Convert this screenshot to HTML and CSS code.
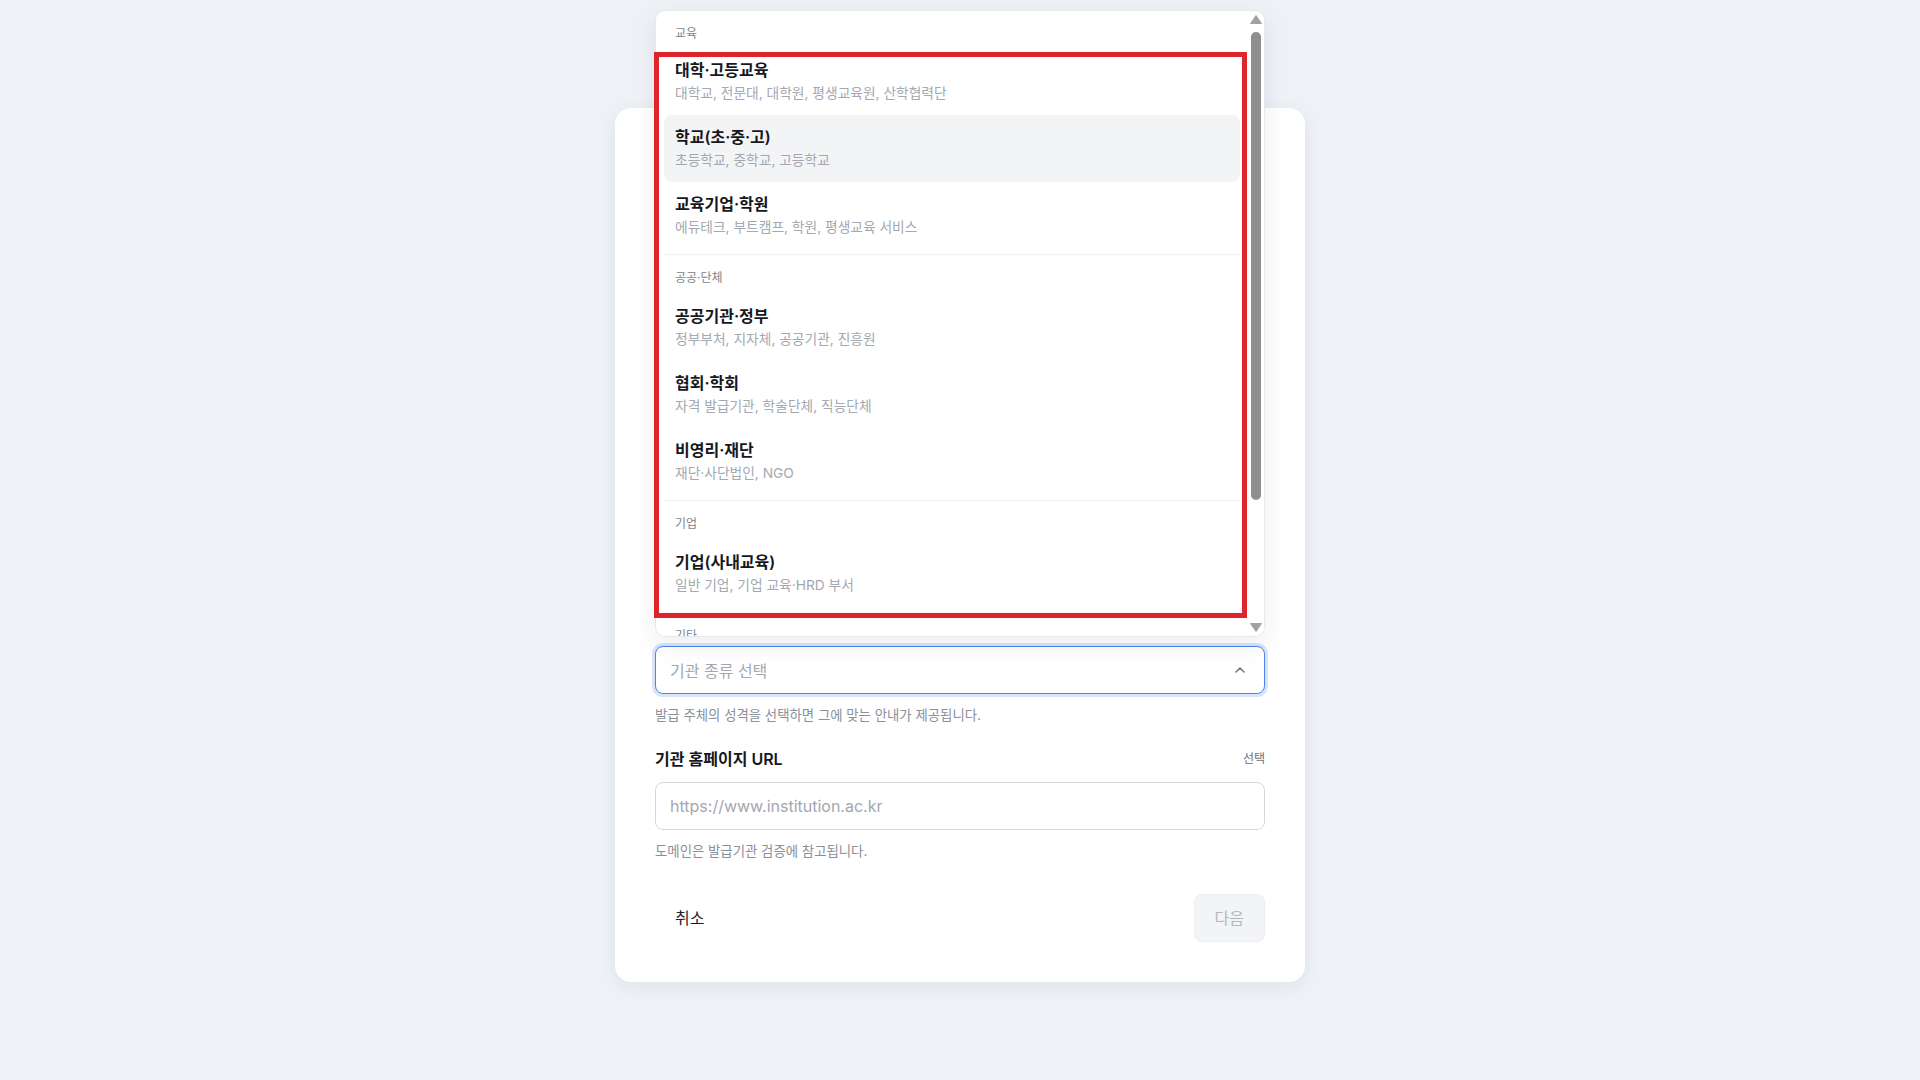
FILE: index.html
```html
<!DOCTYPE html>
<html lang="ko">
<head>
<meta charset="utf-8">
<title>발급기관 등록</title>
<link rel="stylesheet" href="styles.css">
</head>
<body>
<div class="page">
  <main class="card">
    <div class="intro">
      <div class="stepper">
        <span class="step-text">1 / 3 단계 · 발급기관 정보</span>
        <div class="step-bar"><div class="step-fill"></div></div>
      </div>
      <h1 class="title">발급기관 정보를 입력하세요</h1>
      <p class="desc">인증서를 발급하는 기관의 기본 정보를 입력해 주세요.<br>입력한 정보는 인증서와 검증 페이지에 표시됩니다.</p>
    </div>

    <div class="fields">
      <div class="field">
        <div class="field-label"><span>기관명</span><span class="field-tag">필수</span></div>
        <input class="input" type="text" placeholder="예) 한국대학교">
        <p class="helper">인증서에 표시되는 공식 기관명을 입력하세요.</p>
      </div>

      <div class="field">
        <div class="field-label"><span>기관 영문명</span><span class="field-tag">선택</span></div>
        <input class="input" type="text" placeholder="e.g. Korea University">
        <p class="helper">해외 검증 페이지에 함께 표시됩니다.</p>
      </div>

      <div class="field">
        <div class="field-label"><span>기관 종류</span><span class="field-tag">필수</span></div>
        <div class="select-wrap">
          <div class="dropdown">
            <div class="dropdown-list">
              <div class="group">
                <div class="group-label">교육</div>
                <div class="option">
                  <div class="option-title">대학·고등교육</div>
                  <div class="option-sub">대학교, 전문대, 대학원, 평생교육원, 산학협력단</div>
                </div>
                <div class="option is-active">
                  <div class="option-title">학교(초·중·고)</div>
                  <div class="option-sub">초등학교, 중학교, 고등학교</div>
                </div>
                <div class="option">
                  <div class="option-title">교육기업·학원</div>
                  <div class="option-sub">에듀테크, 부트캠프, 학원, 평생교육 서비스</div>
                </div>
              </div>
              <div class="group">
                <div class="group-label">공공·단체</div>
                <div class="option">
                  <div class="option-title">공공기관·정부</div>
                  <div class="option-sub">정부부처, 지자체, 공공기관, 진흥원</div>
                </div>
                <div class="option">
                  <div class="option-title">협회·학회</div>
                  <div class="option-sub">자격 발급기관, 학술단체, 직능단체</div>
                </div>
                <div class="option">
                  <div class="option-title">비영리·재단</div>
                  <div class="option-sub">재단·사단법인, NGO</div>
                </div>
              </div>
              <div class="group">
                <div class="group-label">기업</div>
                <div class="option">
                  <div class="option-title">기업(사내교육)</div>
                  <div class="option-sub">일반 기업, 기업 교육·HRD 부서</div>
                </div>
              </div>
              <div class="group">
                <div class="group-label">기타</div>
                <div class="option">
                  <div class="option-title">개인·전문가</div>
                  <div class="option-sub">강사, 코치, 프리랜서</div>
                </div>
                <div class="option">
                  <div class="option-title">기타</div>
                  <div class="option-sub">위에 해당하지 않는 기관</div>
                </div>
              </div>
            </div>
            <div class="scrollbar" aria-hidden="true">
              <span class="sb-arrow">
                <svg width="16" height="17" viewBox="0 0 16 17"><path d="M2.5 12.5 L8 4.5 L13.5 12.5 Z" fill="#a2a2a2" stroke="#a2a2a2" stroke-width="1" stroke-linejoin="round"/></svg>
              </span>
              <span class="sb-track"><span class="sb-thumb"></span></span>
              <span class="sb-arrow">
                <svg width="16" height="17" viewBox="0 0 16 17"><path d="M2.5 4.5 L8 12.5 L13.5 4.5 Z" fill="#a2a2a2" stroke="#a2a2a2" stroke-width="1" stroke-linejoin="round"/></svg>
              </span>
            </div>
            <div class="annotation"></div>
          </div>
          <div class="select is-open">
            <span class="select-placeholder">기관 종류 선택</span>
            <svg class="chevron" width="16" height="16" viewBox="0 0 16 16" aria-hidden="true">
              <polyline points="4,10 8,6 12,10" fill="none" stroke="#6b7280" stroke-width="1.5" stroke-linecap="round" stroke-linejoin="round"/>
            </svg>
          </div>
        </div>
        <p class="helper">발급 주체의 성격을 선택하면 그에 맞는 안내가 제공됩니다.</p>
      </div>

      <div class="field">
        <div class="field-label"><span>기관 홈페이지 URL</span><span class="field-tag">선택</span></div>
        <input class="input" type="text" placeholder="https://www.institution.ac.kr">
        <p class="helper">도메인은 발급기관 검증에 참고됩니다.</p>
      </div>
    </div>

    <div class="actions">
      <button class="btn btn-ghost" type="button">취소</button>
      <button class="btn btn-next" type="button" disabled>다음</button>
    </div>
  </main>
</div>
</body>
</html>
```

FILE: styles.css
```css
* {
  box-sizing: border-box;
}

html, body {
  margin: 0;
  padding: 0;
}

body {
  background: #eef1f6;
  font-family: "Inter", "Noto Sans CJK KR", sans-serif;
  color: #1a1d23;
}

.page {
  min-height: 100vh;
  padding-top: 10px;
  display: flex;
  align-items: center;
  justify-content: center;
}

.card {
  width: 690px;
  background: #ffffff;
  border-radius: 16px;
  padding: 40px;
  box-shadow: 0 4px 18px rgba(30, 41, 59, 0.07);
}

/* hidden intro (covered by the open dropdown) */
.intro {
  margin-bottom: 48px;
}

.stepper {
  margin-bottom: 24px;
}

.step-text {
  display: block;
  font-size: 13px;
  line-height: 20px;
  color: #6b7280;
}

.step-bar {
  margin-top: 8px;
  height: 4px;
  background: #eef0f3;
  border-radius: 2px;
}

.step-fill {
  width: 33%;
  height: 100%;
  background: #3b82f6;
  border-radius: 2px;
}

.title {
  margin: 0;
  font-size: 26px;
  line-height: 36px;
  font-weight: 700;
}

.desc {
  margin: 8px 0 0;
  font-size: 14px;
  line-height: 22px;
  color: #6b7280;
}

/* fields */
.fields {
  display: flex;
  flex-direction: column;
  gap: 24px;
}

.field {
  display: flex;
  flex-direction: column;
}

.field-label {
  display: flex;
  justify-content: space-between;
  align-items: center;
  font-size: 16px;
  line-height: 22px;
  font-weight: 600;
  color: #16181d;
  margin-bottom: 12px;
}

.field-tag {
  font-size: 12px;
  font-weight: 400;
  color: #6b7280;
}

.input {
  height: 48px;
  width: 100%;
  border: 1px solid #d4d7dc;
  border-radius: 8px;
  padding: 0 14px;
  font-family: inherit;
  font-size: 16px;
  color: #1a1d23;
  background: #ffffff;
  outline: none;
}

.input::placeholder {
  color: #a3a8b0;
}

.helper {
  margin: 12px 0 0;
  font-size: 13.4px;
  line-height: 18px;
  color: #8a9099;
}

/* select */
.select-wrap {
  position: relative;
}

.select {
  height: 48px;
  border: 1px solid #4a84ea;
  border-radius: 8px;
  box-shadow: 0 0 0 3px rgba(74, 132, 234, 0.22);
  display: flex;
  align-items: center;
  justify-content: space-between;
  padding: 0 16px 0 14px;
  background: #ffffff;
}

.select-placeholder {
  font-size: 16px;
  color: #a3a8b0;
}

.chevron {
  display: block;
}

/* dropdown (opens upward) */
.dropdown {
  position: absolute;
  left: 0;
  right: 0;
  bottom: calc(100% + 9px);
  height: 627px;
  z-index: 10;
}

.dropdown-list {
  height: 100%;
  background: #ffffff;
  border: 1px solid #e6e8ec;
  border-radius: 10px;
  box-shadow: 0 8px 24px rgba(30, 41, 59, 0.08);
  overflow-y: auto;
  scrollbar-width: none;
  padding: 4px 24px 12px 8px;
}

.dropdown-list::-webkit-scrollbar {
  display: none;
}

.group + .group {
  margin-top: 5px;
  border-top: 1px solid #f1f2f4;
}

.group-label {
  padding: 14px 11px 7px;
  font-size: 12px;
  line-height: 18px;
  color: #7d838d;
}

.group:first-child .group-label {
  padding-top: 10px;
  padding-bottom: 5px;
}

.option {
  padding: 11px 11px 12px;
  border-radius: 8px;
}

.option.is-active {
  background: #f3f4f6;
}

.option-title {
  font-size: 16px;
  line-height: 22px;
  font-weight: 600;
  color: #16181d;
}

.option-sub {
  margin-top: 2px;
  font-size: 13.75px;
  line-height: 20px;
  color: #a3a8b1;
}

/* scrollbar drawn over the list's right edge */
.scrollbar {
  position: absolute;
  top: 1px;
  bottom: 1px;
  right: 1px;
  width: 16px;
  display: flex;
  flex-direction: column;
}

.sb-arrow {
  height: 17px;
  display: flex;
  align-items: center;
  justify-content: center;
}

.sb-arrow svg {
  display: block;
}

.sb-track {
  flex: 1;
  display: flex;
  flex-direction: column;
  align-items: center;
  padding-top: 4px;
}

.sb-thumb {
  width: 10px;
  height: 468px;
  border-radius: 5px;
  background: #8e8e8e;
}

/* review annotation overlay */
.annotation {
  position: absolute;
  left: -1px;
  top: 42px;
  width: 593px;
  height: 566px;
  border: 5px solid #e0242b;
  pointer-events: none;
}

/* actions */
.actions {
  margin-top: 34px;
  display: flex;
  justify-content: space-between;
  align-items: center;
}

.btn {
  height: 48px;
  padding: 0 20px 3px;
  border-radius: 8px;
  font-family: inherit;
  font-size: 16px;
  cursor: pointer;
}

.btn-ghost {
  background: transparent;
  border: none;
  color: #1f2329;
}

.btn-next {
  background: #f3f4f6;
  border: 1px solid #eceef1;
  color: #b3b8bf;
}
```
